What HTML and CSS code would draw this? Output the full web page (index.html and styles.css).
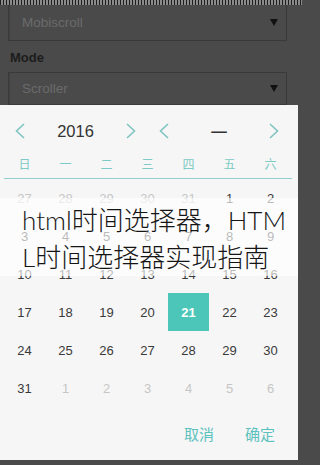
FILE: index.html
```html
<!DOCTYPE html>
<html>
<head>
<meta charset="utf-8">
<link rel="stylesheet" href="styles.css">
</head>
<body>
<div class="screen">
  <div class="strip"></div>
  <div class="form">
    <div class="select first">
      <span class="select-text">Mobiscroll</span>
      <svg class="caret" width="8" height="7" viewBox="0 0 8 7"><path d="M0 0H8L4 7Z" fill="#111"/></svg>
    </div>
    <div class="label">Mode</div>
    <div class="select">
      <span class="select-text">Scroller</span>
      <svg class="caret" width="8" height="7" viewBox="0 0 8 7"><path d="M0 0H8L4 7Z" fill="#111"/></svg>
    </div>
  </div>
  <div class="picker">
    <div class="head">
      <div class="half left">
        <svg class="chev" width="16" height="16" viewBox="0 0 16 16"><path d="M12 1L4.5 8L12 15" fill="none" stroke="#7fc4c0" stroke-width="1.6"/></svg>
        <span class="head-text">2016</span>
        <svg class="chev" width="16" height="16" viewBox="0 0 16 16"><path d="M4 1L11.5 8L4 15" fill="none" stroke="#7fc4c0" stroke-width="1.6"/></svg>
      </div>
      <div class="half right">
        <svg class="chev" width="16" height="16" viewBox="0 0 16 16"><path d="M12 1L4.5 8L12 15" fill="none" stroke="#7fc4c0" stroke-width="1.6"/></svg>
        <span class="head-text cjk">一</span>
        <svg class="chev" width="16" height="16" viewBox="0 0 16 16"><path d="M4 1L11.5 8L4 15" fill="none" stroke="#7fc4c0" stroke-width="1.6"/></svg>
      </div>
    </div>
    <div class="weekdays">
      <span>日</span><span>一</span><span>二</span><span>三</span><span>四</span><span>五</span><span>六</span>
    </div>
    <div class="days">
      <span class="other">27</span><span class="other">28</span><span class="other">29</span><span class="other">30</span><span class="other">31</span><span>1</span><span>2</span>
      <span>3</span><span>4</span><span>5</span><span>6</span><span>7</span><span>8</span><span>9</span>
      <span>10</span><span>11</span><span>12</span><span>13</span><span>14</span><span>15</span><span>16</span>
      <span>17</span><span>18</span><span>19</span><span>20</span><span class="sel">21</span><span>22</span><span>23</span>
      <span>24</span><span>25</span><span>26</span><span>27</span><span>28</span><span>29</span><span>30</span>
      <span>31</span><span class="other">1</span><span class="other">2</span><span class="other">3</span><span class="other">4</span><span class="other">5</span><span class="other">6</span>
    </div>
    <div class="foot">
      <span class="btn">取消</span>
      <span class="btn">确定</span>
    </div>
    <div class="overlay">html时间选择器，HTML时间选择器实现指南</div>
  </div>
</div>
</body>
</html>
```

FILE: styles.css
```css
html, body {
  margin: 0;
  padding: 0;
}
body {
  background: #4a4a4a;
  font-family: "Liberation Sans", "Noto Sans CJK SC", sans-serif;
}
.screen {
  width: 302px;
  height: 465px;
  overflow: hidden;
  background: #4a4a4a;
}
.strip {
  height: 5px;
  background: repeating-linear-gradient(90deg, #1e1e1e 0 1px, #8a8a8a 1px 3px);
}
.form {
  padding: 0 15px 0 8px;
}
.select {
  height: 31px;
  display: flex;
  align-items: center;
  justify-content: space-between;
  padding: 0 8px 0 13px;
  border: 1px solid #3a3a3a;
  box-shadow: inset 3px 0 0 -2px #424242;
}
.select.first {
  height: 35px;
  border-top: none;
}
.select-text {
  font-size: 13.5px;
  color: #6a6a6a;
}
.caret {
  display: block;
}
.label {
  height: 30px;
  padding: 1px 0 0 2px;
  display: flex;
  align-items: center;
  font-size: 13px;
  font-weight: bold;
  color: #1c1c1c;
}
.picker {
  position: relative;
  width: 298px;
  height: 355px;
  background: #f6f6f6;
}
.head {
  height: 44px;
  padding: 4px 0 0 12px;
  display: flex;
  gap: 17px;
}
.half {
  display: flex;
  align-items: center;
  justify-content: space-between;
}
.half.left { width: 127px; }
.half.right { width: 126px; }
.chev { display: block; }
.head-text {
  font-size: 16.5px;
  color: #333;
}
.head-text.cjk {
  font-family: "Noto Sans CJK SC", sans-serif;
  font-size: 17px;
}
.weekdays {
  margin: 0 6px 0 4px;
  height: 20px;
  padding-bottom: 5px;
  border-bottom: 1px solid #8fcfcd;
  display: grid;
  grid-template-columns: repeat(7, 41px);
}
.weekdays span {
  display: flex;
  align-items: center;
  justify-content: center;
  font-family: "Noto Sans CJK SC", sans-serif;
  font-size: 12px;
  color: #7ccbc4;
}
.days {
  margin: 0 6px 0 4px;
  display: grid;
  grid-template-columns: repeat(7, 41px);
  grid-auto-rows: 38px;
}
.days span {
  display: flex;
  align-items: center;
  justify-content: center;
  font-size: 13px;
  color: #3a3a3a;
}
.days span.other {
  color: #c6c6c6;
}
.days span.sel {
  background: #4cc6b8;
  color: #fff;
  font-weight: bold;
}
.foot {
  height: 52px;
  display: flex;
  align-items: center;
  justify-content: flex-end;
  gap: 31px;
  padding-right: 23px;
}
.btn {
  font-family: "Noto Sans CJK SC", sans-serif;
  font-size: 15px;
  color: #5cc2bf;
}
.overlay {
  position: absolute;
  left: 0;
  top: 93px;
  width: 266px;
  height: 74px;
  padding: 4px 10px 0 22px;
  background: rgba(255, 255, 255, 0.65);
  font-family: "Lato", "Noto Sans CJK SC", sans-serif;
  font-weight: 300;
  font-size: 26px;
  line-height: 37px;
  color: #151515;
  word-break: break-all;
}
```
